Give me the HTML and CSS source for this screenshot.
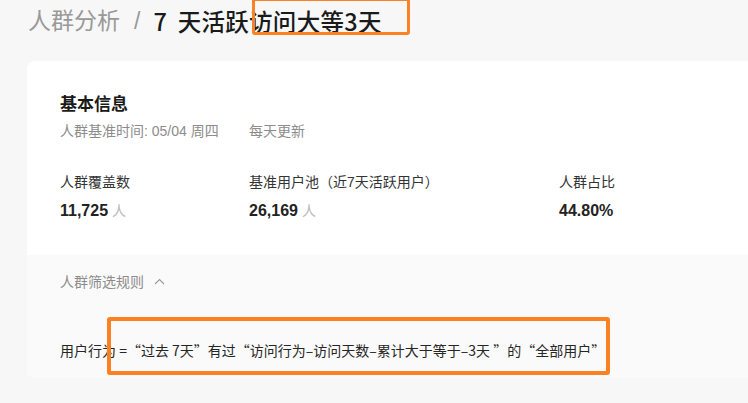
FILE: index.html
```html
<!DOCTYPE html>
<html lang="zh-CN">
<head>
<meta charset="utf-8">
<title>人群分析</title>
<link rel="stylesheet" href="styles.css">
</head>
<body>
<div class="page">
  <div class="crumbs">
    <span class="crumb-parent">人群分析</span>
    <span class="crumb-sep">/</span>
    <span class="crumb-current">7 天活跃访问大等3天</span>
  </div>

  <div class="card">
    <div class="card-main">
      <h2 class="card-title">基本信息</h2>
      <div class="meta">
        <span class="meta-col">人群基准时间: 05/04 周四</span>
        <span>每天更新</span>
      </div>
      <div class="stats">
        <div class="stat stat-a">
          <div class="stat-label">人群覆盖数</div>
          <div class="stat-value">11,725<span class="unit">人</span></div>
        </div>
        <div class="stat stat-b">
          <div class="stat-label">基准用户池（近7天活跃用户）</div>
          <div class="stat-value">26,169<span class="unit">人</span></div>
        </div>
        <div class="stat">
          <div class="stat-label">人群占比</div>
          <div class="stat-value">44.80%</div>
        </div>
      </div>
    </div>
    <div class="card-rules">
      <div class="rules-toggle">
        <span>人群筛选规则</span>
        <svg class="chev" width="11" height="7" viewBox="0 0 11 7"><polyline points="1,6 5.5,1.5 10,6" fill="none" stroke="#9a9a9a" stroke-width="1.1"/></svg>
      </div>
      <div class="rule">用户行为 =“过去 7天”有过“访问行为–访问天数–累计大于等于–3天 ”的“全部用户”</div>
    </div>
  </div>

  <div class="mark mark-title"></div>
  <div class="mark mark-rule"></div>
</div>
</body>
</html>
```
FILE: styles.css
```css
html, body {
  margin: 0;
  padding: 0;
}
body {
  background: #f7f7f7;
  overflow: hidden;
  font-family: "Liberation Sans", "Noto Sans CJK SC", sans-serif;
  color: #262626;
}
.page {
  position: relative;
  width: 748px;
  height: 403px;
}
.crumbs {
  height: 42px;
  line-height: 42px;
  padding-left: 28px;
  font-size: 23px;
  white-space: nowrap;
  display: flex;
}
.crumb-parent {
  color: #999999;
}
.crumb-sep {
  color: #999999;
  margin: 0 13px 0 14px;
}
.crumb-current {
  color: #1a1a1a;
  font-family: "Noto Sans CJK SC", sans-serif;
  font-weight: 500;
  font-size: 23.5px;
  word-spacing: 5px;
  letter-spacing: 0.3px;
}
.card {
  margin: 19px -40px 0 27px;
  background: #ffffff;
  border-radius: 8px;
  overflow: hidden;
}
.card-main {
  height: 194px;
  box-sizing: border-box;
  padding: 33px 0 0 33px;
}
.card-title {
  margin: 0;
  font-size: 17px;
  line-height: 22px;
  font-weight: 600;
  color: #1a1a1a;
}
.meta {
  margin-top: 5px;
  display: flex;
  font-size: 14px;
  line-height: 20px;
  color: #8c8c8c;
}
.meta-col {
  width: 189px;
}
.stats {
  display: flex;
  margin-top: 31px;
}
.stat-a {
  width: 189px;
}
.stat-b {
  width: 310px;
}
.stat-label {
  font-size: 14px;
  line-height: 20px;
  color: #333333;
}
.stat-value {
  margin-top: 8px;
  font-size: 16px;
  line-height: 22px;
  font-weight: 700;
  color: #222222;
}
.unit {
  font-size: 14px;
  font-weight: 400;
  color: #b8b8b8;
  margin-left: 4px;
}
.card-rules {
  background: #fafafa;
  height: 123px;
  box-sizing: border-box;
  padding: 17px 0 0 33px;
}
.rules-toggle {
  display: flex;
  align-items: center;
  gap: 10px;
  font-size: 14px;
  line-height: 20px;
  color: #8c8c8c;
}
.chev {
  display: block;
  margin-top: -2px;
}
.rule {
  margin-top: 48px;
  font-family: "Noto Sans CJK SC", sans-serif;
  font-size: 14px;
  line-height: 20px;
  color: #262626;
  white-space: nowrap;
}
.mark {
  position: absolute;
  border: 3px solid #fb8122;
  border-radius: 3px;
  box-sizing: border-box;
}
.mark-title {
  left: 252px;
  top: -2px;
  width: 158px;
  height: 37px;
}
.mark-rule {
  left: 107px;
  top: 317px;
  width: 503px;
  height: 58px;
  border-width: 4px;
}
```
